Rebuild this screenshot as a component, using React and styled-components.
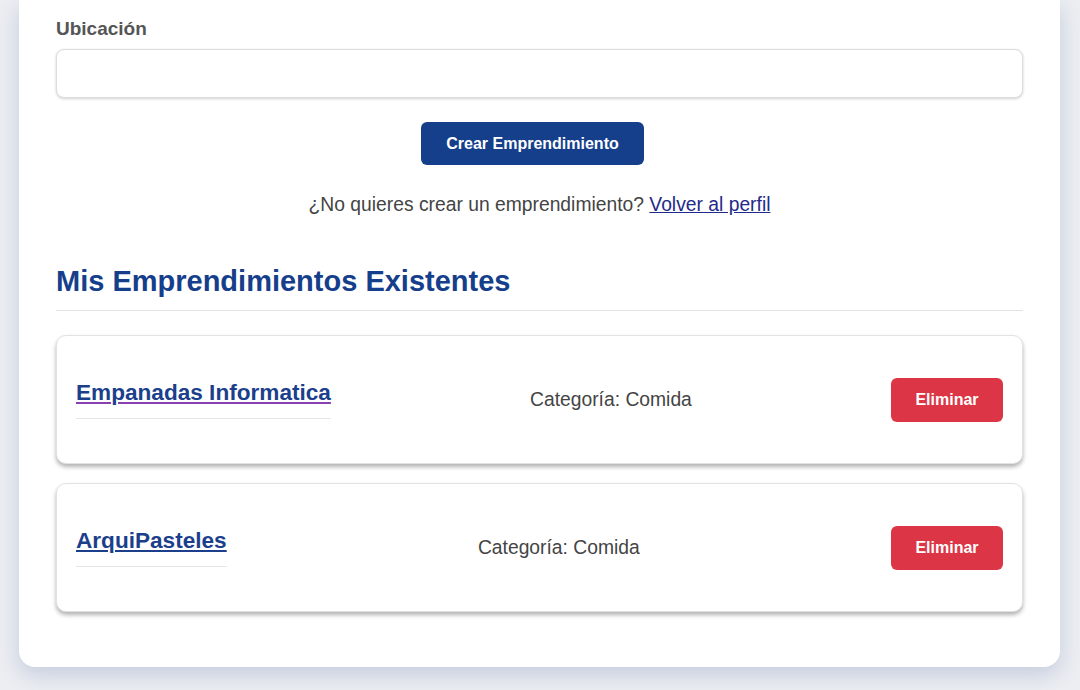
import React from 'react'
import styled, { createGlobalStyle } from 'styled-components'

const GlobalStyle = createGlobalStyle`
	html, body {
		margin: 0;
		padding: 0;
		background: #eceef2;
		font-family: "Liberation Sans", Arial, sans-serif;
	}
`

const Page = styled.div`
	padding: 0 20px 24px 19px;
	height: 690px;
	box-sizing: border-box;
	overflow: hidden;
`

const Card = styled.div`
	background: #ffffff;
	border-radius: 0 0 16px 16px;
	box-shadow: 0 8px 22px rgba(40, 70, 140, 0.2);
	padding: 18px 37px 55px 37px;
`

const Label = styled.label`
	display: block;
	font-size: 19px;
	font-weight: bold;
	color: #555555;
	margin-bottom: 9px;
`

const Input = styled.input`
	display: block;
	width: 100%;
	height: 49px;
	box-sizing: border-box;
	border: 1px solid #dddddd;
	border-radius: 8px;
	box-shadow: 0 1px 3px rgba(0, 0, 0, 0.18);
	outline: none;
	font-size: 18px;
	padding: 0 14px;
`

const Center = styled.div`
	display: flex;
	justify-content: center;
	margin-top: 24px;
	padding-right: 14px;
`

const PrimaryButton = styled.button`
	width: 223px;
	height: 43px;
	border: none;
	border-radius: 6px;
	background: #153e8b;
	color: #ffffff;
	font-family: inherit;
	font-size: 16px;
	font-weight: bold;
`

const Note = styled.p`
	margin: 29px 0 0 0;
	text-align: center;
	font-size: 19.3px;
	color: #444444;
`

const Link = styled.a`
	color: #1f2a8a;
	text-decoration: underline;
`

const Heading = styled.h2`
	margin: 49px 0 0 0;
	padding-bottom: 12px;
	border-bottom: 1px solid #e4e4e4;
	font-size: 29px;
	font-weight: bold;
	color: #153e8b;
`

const List = styled.div`
	display: flex;
	flex-direction: column;
	gap: 19px;
	margin-top: 24px;
`

const Item = styled.div`
	display: flex;
	align-items: center;
	justify-content: space-between;
	height: 129px;
	box-sizing: border-box;
	padding: 0 19px;
	border: 1px solid #e2e2e2;
	border-radius: 10px;
	box-shadow: 0 3px 4px rgba(0, 0, 0, 0.3);
	background: #ffffff;
`

const Name = styled.h3`
	margin: 0;
	padding-bottom: 12px;
	border-bottom: 1px solid #e6e6e6;
	font-size: 22.6px;
	font-weight: bold;
`

const NameLink = styled.a`
	color: #1c3f8c;
	text-decoration: underline;
	text-decoration-color: ${p => p.$visited ? '#8a3fb0' : '#1c3f8c'};
	text-decoration-thickness: 2px;
	text-underline-offset: 2px;
`

const Category = styled.span`
	font-size: 19.3px;
	color: #444444;
`

const DangerButton = styled.button`
	width: 112px;
	height: 44px;
	border: none;
	border-radius: 6px;
	background: #dc3545;
	color: #ffffff;
	font-family: inherit;
	font-size: 16px;
	font-weight: bold;
`

const items = [
	{ name: 'Empanadas Informatica', category: 'Comida', visited: true },
	{ name: 'ArquiPasteles', category: 'Comida', visited: false },
]

function App() {
	return (
		<Page>
			<GlobalStyle />
			<Card>
				<Label>Ubicación</Label>
				<Input type="text" />
				<Center>
					<PrimaryButton>Crear Emprendimiento</PrimaryButton>
				</Center>
				<Note>
					¿No quieres crear un emprendimiento? <Link href="#">Volver al perfil</Link>
				</Note>
				<Heading>Mis Emprendimientos Existentes</Heading>
				<List>
					{items.map(item => (
						<Item key={item.name}>
							<Name>
								<NameLink href="#" $visited={item.visited}>{item.name}</NameLink>
							</Name>
							<Category>Categoría: {item.category}</Category>
							<DangerButton>Eliminar</DangerButton>
						</Item>
					))}
				</List>
			</Card>
		</Page>
	)
}

export default App
